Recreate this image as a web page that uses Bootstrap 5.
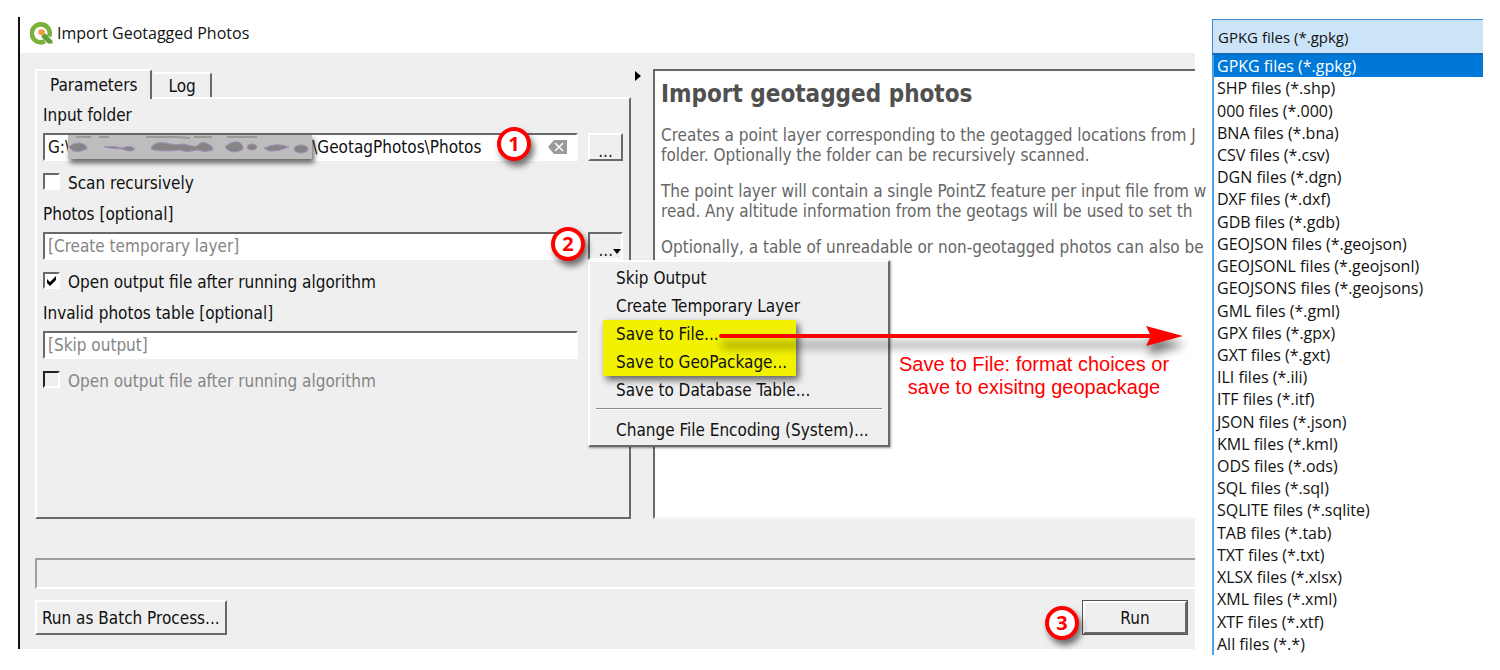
<!DOCTYPE html>
<html lang="en">
<head>
<meta charset="utf-8">
<meta name="viewport" content="width=device-width, initial-scale=1">
<title>Import Geotagged Photos</title>
<link href="https://cdn.jsdelivr.net/npm/bootstrap@5.3.0/dist/css/bootstrap.min.css" rel="stylesheet">
<style>
  :root { --face: #efefef; --dark: #696969; --mid: #a0a0a0; }
  body { font-family: "DejaVu Sans Condensed", "DejaVu Sans", sans-serif; font-size: 17px; line-height: 20px; color: #111; background: #fff; }
  .stage { min-height: 100vh; padding: 17px 17px 15px 18px; gap: 17px; }
  .dialog-win { border-left: 2px solid #111; background: var(--face); min-width: 0; }
  .title-strip { background: #fff; height: 36px; padding: 0 10px 4px; gap: 4px; }
  .title-strip h1, .formats { font-family: "Open Sans", "Noto Sans", sans-serif; font-size: 16px; }
  .title-strip h1 { line-height: 24px; font-weight: 400; }
  .win-body { padding: 16px 0 14px 15px; }
  .panes { display: grid; grid-template-columns: minmax(0, 596fr) 22px minmax(0, 542fr); }
  .raised { border: 2px solid; border-color: #fff var(--dark) var(--dark) #fff; }
  .sunken { border: 2px solid; border-color: var(--dark) #fff #fff var(--dark); }
  .tabs button { background: var(--face); border: 2px solid; border-color: #fff var(--dark) transparent #fff; border-bottom: 0; padding: 0 13px; color: inherit; border-radius: 3px 3px 0 0; }
  .tabs .on { height: 30px; margin-bottom: -2px; z-index: 1; position: relative; }
  .tabs .off { height: 25px; padding: 0 14px; border-left-color: transparent; }
  .sheet { min-height: 422px; padding: 1px 6px 0; }
  .sheet label.head { line-height: 30px; padding-bottom: 3px; }
  .well { background: #fff; height: 28px; width: 535px; flex: 0 1 auto; min-width: 0; padding-left: 3px; }
  .well input { border: 0; outline: 0; background: transparent; min-width: 0; padding: 0; color: inherit; }
  .well input::placeholder { color: #858585; opacity: 1; }
  .dots { width: 35px; height: 28px; background: var(--face); padding: 0; line-height: 32px; color: #222; }
  .tick { padding-top: 6px; height: 38px; gap: 8px; }
  .tick input { appearance: none; width: 17px; height: 17px; margin: 0 0 3px; background: #fff; border: 2px solid; border-color: var(--dark) #fff #fff var(--dark); }
  .tick input:checked { background: #fff url("data:image/svg+xml,%3Csvg xmlns='http://www.w3.org/2000/svg' viewBox='0 0 13 13'%3E%3Cpath d='M2 5v4l3 3 6-6V2L5 8z'/%3E%3C/svg%3E") center/13px no-repeat; }
  .tick input:disabled { background: var(--face); border-color: #222 #fff #fff #222; }
  .tick input:disabled + label { color: #858585; }
  .pin { width: 34px; height: 34px; border: 4px solid #f00; border-radius: 50%; background: #fff; color: #f00; font: bold 20px/26px "Open Sans", sans-serif; text-align: center; box-shadow: 3px 5px 6px rgba(0,0,0,.55); position: absolute; z-index: 6; }
  .pin-one { right: 45px; top: -8px; }
  .pin-two { right: -9px; top: -7px; }
  .pin-three { right: 116px; top: 6px; }
  .redact { flex: none; margin-left: -2px; box-shadow: 2px 4px 5px rgba(0,0,0,.6); background: #bdbdbd; z-index: 1; }
  .drop { position: absolute; left: 0; top: 28px; width: 302px; background: var(--face); z-index: 4; box-shadow: 1px 1px 2px rgba(0,0,0,.4); padding: 2px 4px 1px; }
  .drop button { display: block; width: 100%; border: 0; background: none; text-align: left; line-height: 28px; height: 28px; padding: 0 0 0 22px; color: inherit; white-space: nowrap; }
  .drop .glow { background: #f2f200; margin: 0 88px 0 9px; box-shadow: 3px 4px 7px rgba(0,0,0,.6); }
  .drop .glow button { padding-left: 13px; }
  .drop hr { margin: 4px 2px 6px; color: #888; opacity: 1; border-top: 1px solid #888; border-bottom: 1px solid #fff; }
  .arrow { position: absolute; left: 128px; top: 59px; pointer-events: none; filter: drop-shadow(2px 9px 5px rgba(0,0,0,.55)); }
  .remark { position: absolute; left: 304px; top: 91px; width: 280px; color: #f00; font: 20px/23px "Liberation Sans", sans-serif; text-align: center; white-space: nowrap; z-index: 4; }
  .help-pane { background: #fff; border-right: 0; border-bottom-color: #f8f8f8; padding: 7px 0 0 6px; color: #666; white-space: nowrap; overflow: clip; overflow-clip-margin: 14px; }
  .help-pane h2 { font-size: 24px; line-height: 32px; font-weight: 700; color: #505050; margin-bottom: 15px; }
  .help-pane p { margin-bottom: 16px; }
  .bar-well { border: 2px solid; border-color: var(--mid) transparent #fff var(--mid); border-right: 0; height: 31px; margin: 39px 0 11px; }
  .big { height: 35px; padding: 0 5px; background: var(--face); color: inherit; }
  .run { width: 106px; margin-right: 7px; outline: 1px solid #555; outline-offset: -1px; border-width: 3px; }
  .formats { flex: 0 0 271px; padding-top: 2px; color: #111; }
  .formats select { appearance: none; background: #cce4f7; border: 1px solid #3a8ad0; border-right: 0; border-bottom: 2px solid #1469b8; height: 36px; padding: 0 5px; border-radius: 0; color: inherit; font-size: 15px; }
  .formats .rows { border-left: 2px solid #4ba3ec; }
  .formats .rows button { border: 0; background: none; color: inherit; text-align: left; padding: 0 3px; font-size: 16px; line-height: 20px; flex: 1 1 0; min-height: 20px; }
  .formats .rows .picked { background: #0078d7; color: #fff; }
</style>
</head>
<body>
<div class="stage d-flex">
  <main class="dialog-win flex-fill align-self-start">
    <header class="title-strip d-flex align-items-center">
      <svg width="23" height="24" viewBox="0 0 23 24" aria-hidden="true">
        <path d="M15 20.300A9 9 0 1 1 19.200 15.500" fill="none" stroke="#7bb03a" stroke-width="4.600"/>
        <path d="M11.500 12.500l4 0 7 7.500v2.500h-4.500l-6.500-6.500z" fill="#5f9f35"/>
        <path d="M8.500 8.500h5l1.500 2-2 4.500-4.500-2z" fill="#f39a3c"/>
      </svg>
      <h1 class="m-0">Import Geotagged Photos</h1>
    </header>
    <div class="win-body">
      <div class="panes">
        <section>
          <div class="tabs d-flex align-items-end" role="tablist">
            <button type="button" class="on" role="tab" aria-selected="true">Parameters</button>
            <button type="button" class="off" role="tab" aria-selected="false">Log</button>
          </div>
          <div class="sheet raised">
            <label class="head d-block" for="folder">Input folder</label>
            <div class="d-flex justify-content-between position-relative">
              <div class="well sunken d-flex align-items-center position-relative">
                <span>G:\</span>
                <svg class="redact" width="244" height="24" viewBox="0 0 244 24" aria-hidden="true">
                  <g fill="#858585" stroke="#a58fb8" stroke-width="1">
                    <path d="M1 12q5-5 11-4 8 2 7 6-8 4-14 2z"/>
                    <path d="M36 12q10-2 18 1 8-3 12 0 1 3-4 3-5 0-7-2-10 0-19-2z"/>
                    <path d="M83 13q3-7 15-5 8 3 18 1 10 3 13 2 4-5 9-3 8 3 7 7-8 3-16 0-10 3-18 0-16 2-24 0-5 0-4-2z"/>
                    <path d="M157 12q6-6 14-5 6 4 3 8-8 4-14 0z"/>
                    <ellipse cx="184" cy="12" rx="5" ry="3"/>
                    <path d="M196 13q12-6 25-1-11 5-20 4z"/>
                    <ellipse cx="233" cy="14" rx="7" ry="4"/>
                  </g>
                  <path d="M8 2h15M31 2h10M78 2h30l14 1M126 2h18M159 2h30" stroke="#999" stroke-width="2"/>
                </svg>
                <input id="folder" class="flex-fill" type="text" value="\GeotagPhotos\Photos">
                <svg class="me-2 flex-shrink-0" width="20" height="14" viewBox="0 0 20 14" aria-hidden="true">
                  <path d="M6 0h13v14H6L0 7z" fill="#9a9a9a"/>
                  <path d="M7 3l8 8M15 3l-8 8" stroke="#fff" stroke-width="1.500"/>
                </svg>
                <span class="pin pin-one">1</span>
              </div>
              <button type="button" class="dots raised" aria-label="Browse for folder">...</button>
            </div>
            <div class="tick d-flex align-items-center"><input type="checkbox" id="scan"><label for="scan">Scan recursively</label></div>

            <label class="head d-block" for="photos">Photos [optional]</label>
            <div class="d-flex justify-content-between">
              <div class="well sunken d-flex align-items-center position-relative">
                <input id="photos" class="flex-fill" type="text" placeholder="[Create temporary layer]">
                <span class="pin pin-two">2</span>
              </div>
              <div class="position-relative">
                <button type="button" class="dots sunken d-flex justify-content-end" aria-label="Output options"><span>...</span>
                  <svg class="align-self-end mb-1" width="8" height="5" viewBox="0 0 8 5" aria-hidden="true"><path d="M0 0h8L4 5z" fill="#000"/></svg>
                </button>
                <div class="drop raised" role="menu">
                  <button type="button" role="menuitem">Skip Output</button>
                  <button type="button" role="menuitem">Create Temporary Layer</button>
                  <div class="glow">
                    <button type="button" role="menuitem">Save to File...</button>
                    <button type="button" role="menuitem">Save to GeoPackage...</button>
                  </div>
                  <button type="button" role="menuitem">Save to Database Table...</button>
                  <hr>
                  <button type="button" role="menuitem">Change File Encoding (System)...</button>
                  <svg class="arrow" width="466" height="30" viewBox="0 0 466 30" aria-hidden="true">
                    <path d="M3 15H436" stroke="#f00" stroke-width="4" stroke-linecap="round"/>
                    <path d="M428 5l37 10-37 10 5-10z" fill="#f00"/>
                  </svg>
                  <div class="remark">Save to File: format choices or<br>save to exisitng geopackage</div>
                </div>
              </div>
            </div>
            <div class="tick d-flex align-items-center"><input type="checkbox" id="openA" checked><label for="openA">Open output file after running algorithm</label></div>

            <label class="head d-block" for="invalid">Invalid photos table [optional]</label>
            <div class="well sunken d-flex align-items-center">
              <input id="invalid" class="flex-fill" type="text" placeholder="[Skip output]">
            </div>
            <div class="tick d-flex align-items-center"><input type="checkbox" id="openB" disabled><label for="openB">Open output file after running algorithm</label></div>
          </div>
        </section>
        <div class="d-flex ps-1">
          <svg width="7" height="14" viewBox="0 0 7 14" aria-hidden="true"><path d="M0 2l6 5-6 5z" fill="#000"/></svg>
        </div>
        <section class="help-pane sunken">
          <h2>Import geotagged photos</h2>
          <p>Creates a point layer corresponding to the geotagged locations from J<br>folder. Optionally the folder can be recursively scanned.</p>
          <p>The point layer will contain a single PointZ feature per input file from w<br>read. Any altitude information from the geotags will be used to set th</p>
          <p>Optionally, a table of unreadable or non-geotagged photos can also be</p>
        </section>
      </div>
      <div class="bar-well"></div>
      <div class="d-flex justify-content-between position-relative">
        <button type="button" class="big raised">Run as Batch Process...</button>
        <span class="pin pin-three">3</span>
        <button type="button" class="big run raised">Run</button>
      </div>
    </div>
  </main>
  <aside class="formats d-flex flex-column">
    <select aria-label="File format"><option>GPKG files (*.gpkg)</option></select>
    <div class="rows d-flex flex-column flex-fill" role="listbox" aria-label="Formats">
      <button type="button" class="picked">GPKG files (*.gpkg)</button>
      <button type="button">SHP files (*.shp)</button>
      <button type="button">000 files (*.000)</button>
      <button type="button">BNA files (*.bna)</button>
      <button type="button">CSV files (*.csv)</button>
      <button type="button">DGN files (*.dgn)</button>
      <button type="button">DXF files (*.dxf)</button>
      <button type="button">GDB files (*.gdb)</button>
      <button type="button">GEOJSON files (*.geojson)</button>
      <button type="button">GEOJSONL files (*.geojsonl)</button>
      <button type="button">GEOJSONS files (*.geojsons)</button>
      <button type="button">GML files (*.gml)</button>
      <button type="button">GPX files (*.gpx)</button>
      <button type="button">GXT files (*.gxt)</button>
      <button type="button">ILI files (*.ili)</button>
      <button type="button">ITF files (*.itf)</button>
      <button type="button">JSON files (*.json)</button>
      <button type="button">KML files (*.kml)</button>
      <button type="button">ODS files (*.ods)</button>
      <button type="button">SQL files (*.sql)</button>
      <button type="button">SQLITE files (*.sqlite)</button>
      <button type="button">TAB files (*.tab)</button>
      <button type="button">TXT files (*.txt)</button>
      <button type="button">XLSX files (*.xlsx)</button>
      <button type="button">XML files (*.xml)</button>
      <button type="button">XTF files (*.xtf)</button>
      <button type="button">All files (*.*)</button>
    </div>
  </aside>
</div>
<script src="https://cdn.jsdelivr.net/npm/bootstrap@5.3.0/dist/js/bootstrap.bundle.min.js"></script>
</body>
</html>
